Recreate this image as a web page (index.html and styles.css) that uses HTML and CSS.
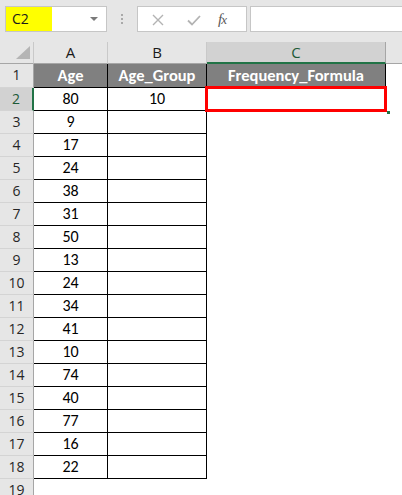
FILE: index.html
```html
<!DOCTYPE html>
<html>
<head>
<meta charset="utf-8">
<link rel="stylesheet" href="styles.css">
</head>
<body>
<div class="app">
  <div class="toolbar">
    <div class="namebox">
      <span class="name">C2</span>
      <span class="caret"></span>
    </div>
    <div class="dots"><i></i><i></i><i></i></div>
    <div class="fxbox">
      <svg class="ic-x" width="12" height="12" viewBox="0 0 12 12"><path d="M1 1 L11 11 M11 1 L1 11" stroke="#b3b3b3" stroke-width="1.4" fill="none"/></svg>
      <svg class="ic-check" width="14" height="11" viewBox="0 0 14 11"><path d="M1 5.5 L5 9.5 L13 1" stroke="#b3b3b3" stroke-width="1.8" fill="none"/></svg>
      <span class="fx">f<span class="fx-x">x</span></span>
    </div>
    <div class="formula"></div>
  </div>
  <div class="sheet">
    <div class="corner"><span class="tri"></span></div>
    <div class="colhead">A</div>
    <div class="colhead">B</div>
    <div class="colhead sel">C</div>
    <div class="colhead rest"></div>

    <div class="rowhead">1</div>
    <div class="cell b hdr">Age</div>
    <div class="cell b hdr">Age_Group</div>
    <div class="cell b hdr">Frequency_Formula</div>
    <div class="cell"></div>

    <div class="rowhead sel">2</div>
    <div class="cell b">80</div>
    <div class="cell b">10</div>
    <div class="cell active"><span class="redbox"></span><span class="handle"></span></div>
    <div class="cell"></div>

    <div class="rowhead">3</div><div class="cell b">9</div><div class="cell b"></div><div class="cell"></div><div class="cell"></div>
    <div class="rowhead">4</div><div class="cell b">17</div><div class="cell b"></div><div class="cell"></div><div class="cell"></div>
    <div class="rowhead">5</div><div class="cell b">24</div><div class="cell b"></div><div class="cell"></div><div class="cell"></div>
    <div class="rowhead">6</div><div class="cell b">38</div><div class="cell b"></div><div class="cell"></div><div class="cell"></div>
    <div class="rowhead">7</div><div class="cell b">31</div><div class="cell b"></div><div class="cell"></div><div class="cell"></div>
    <div class="rowhead">8</div><div class="cell b">50</div><div class="cell b"></div><div class="cell"></div><div class="cell"></div>
    <div class="rowhead">9</div><div class="cell b">13</div><div class="cell b"></div><div class="cell"></div><div class="cell"></div>
    <div class="rowhead">10</div><div class="cell b">24</div><div class="cell b"></div><div class="cell"></div><div class="cell"></div>
    <div class="rowhead">11</div><div class="cell b">34</div><div class="cell b"></div><div class="cell"></div><div class="cell"></div>
    <div class="rowhead">12</div><div class="cell b">41</div><div class="cell b"></div><div class="cell"></div><div class="cell"></div>
    <div class="rowhead">13</div><div class="cell b">10</div><div class="cell b"></div><div class="cell"></div><div class="cell"></div>
    <div class="rowhead">14</div><div class="cell b">74</div><div class="cell b"></div><div class="cell"></div><div class="cell"></div>
    <div class="rowhead">15</div><div class="cell b">40</div><div class="cell b"></div><div class="cell"></div><div class="cell"></div>
    <div class="rowhead">16</div><div class="cell b">77</div><div class="cell b"></div><div class="cell"></div><div class="cell"></div>
    <div class="rowhead">17</div><div class="cell b">16</div><div class="cell b"></div><div class="cell"></div><div class="cell"></div>
    <div class="rowhead">18</div><div class="cell b">22</div><div class="cell b"></div><div class="cell"></div><div class="cell"></div>
    <div class="rowhead">19</div><div class="cell"></div><div class="cell"></div><div class="cell"></div><div class="cell"></div>
  </div>
</div>
</body>
</html>
```

FILE: styles.css
```css
* { box-sizing: border-box; }
html, body { margin: 0; padding: 0; background: #ffffff; }
body { width: 402px; height: 495px; overflow: hidden; }

.app { display: flex; flex-direction: column; }

.toolbar {
  height: 42px;
  background: #e6e6e6;
  display: flex;
  align-items: flex-start;
  padding: 6px 0 0 5px;
}

.namebox {
  width: 102px;
  height: 26px;
  background: #ffffff;
  border: 1px solid #c6c6c6;
  display: flex;
  align-items: stretch;
}
.name {
  width: 46px;
  background: #ffff00;
  font-family: "Open Sans", "Noto Sans", sans-serif;
  font-size: 14px;
  line-height: 24px;
  color: #1a1a1a;
  padding-left: 6px;
}
.caret {
  margin: 10px 0 0 38px;
  width: 0; height: 0;
  border-left: 4px solid transparent;
  border-right: 4px solid transparent;
  border-top: 4px solid #7a7a7a;
}

.dots {
  width: 2px;
  margin: 8px 0 0 14px;
  display: flex;
  flex-direction: column;
  gap: 2px;
}
.dots i { display: block; width: 2px; height: 2px; background: #a9a9a9; }

.fxbox {
  margin-left: 14px;
  width: 110px;
  height: 26px;
  background: #ffffff;
  border: 1px solid #c6c6c6;
  display: flex;
  align-items: center;
  padding-left: 14px;
}
.ic-x { margin-top: 1px; }
.ic-check { margin-left: 23px; margin-top: 2px; }
.fx {
  margin-left: 17px;
  font-family: "Liberation Serif", serif;
  font-style: italic;
  font-size: 15px;
  color: #595959;
  letter-spacing: -1px;
}
.fx-x { font-size: 13px; }

.formula {
  margin-left: 3px;
  flex: 1;
  height: 26px;
  background: #ffffff;
  border: 1px solid #c6c6c6;
  border-right: none;
}

.sheet {
  display: grid;
  grid-template-columns: 34px 74px 99px 179px 1fr;
  grid-template-rows: 22px 24px;
  grid-auto-rows: 23px;
}

.corner {
  background: #e6e6e6;
  border-right: 1px solid #c9c9c9;
  border-bottom: 1px solid #a6a6a6;
  position: relative;
}
.tri {
  position: absolute;
  right: 3px;
  bottom: 4px;
  width: 0; height: 0;
  border-left: 14px solid transparent;
  border-bottom: 13px solid #b5b5b5;
}

.colhead {
  background: #e6e6e6;
  border-right: 1px solid #c9c9c9;
  border-bottom: 1px solid #a6a6a6;
  font-family: "Open Sans", "Noto Sans", sans-serif;
  font-size: 15px;
  line-height: 21px;
  text-align: center;
  color: #1a1a1a;
}
.colhead.sel {
  background: #d2d2d2;
  border-bottom: 2px solid #217346;
  border-right-color: #a6a6a6;
  color: #1d5a37;
}
.colhead.rest { border-right: none; }

.rowhead {
  background: #e6e6e6;
  border-right: 1px solid #a6a6a6;
  border-bottom: 1px solid #d4d4d4;
  font-family: "Open Sans", "Noto Sans", sans-serif;
  font-size: 14px;
  line-height: 22px;
  text-align: center;
  color: #262626;
}
.rowhead.sel {
  background: #d2d2d2;
  border-right: 2px solid #217346;
  color: #1d5a37;
}

.cell {
  font-family: "Carlito", "Lato", sans-serif;
  font-size: 16px;
  line-height: 22px;
  text-align: center;
  color: #000000;
}
.cell.b {
  border-right: 1px solid #000000;
  border-bottom: 1px solid #000000;
}
.cell.hdr {
  background: #808080;
  color: #ffffff;
  font-weight: bold;
  font-size: 16.5px;
  line-height: 23px;
}
.cell.active { position: relative; }
.redbox {
  position: absolute;
  left: -2px;
  top: -2px;
  width: 182px;
  height: 26px;
  border: 3px solid #ff0000;
}
.handle {
  position: absolute;
  right: -4px;
  bottom: -3px;
  width: 3px;
  height: 3px;
  background: #217346;
}
```
